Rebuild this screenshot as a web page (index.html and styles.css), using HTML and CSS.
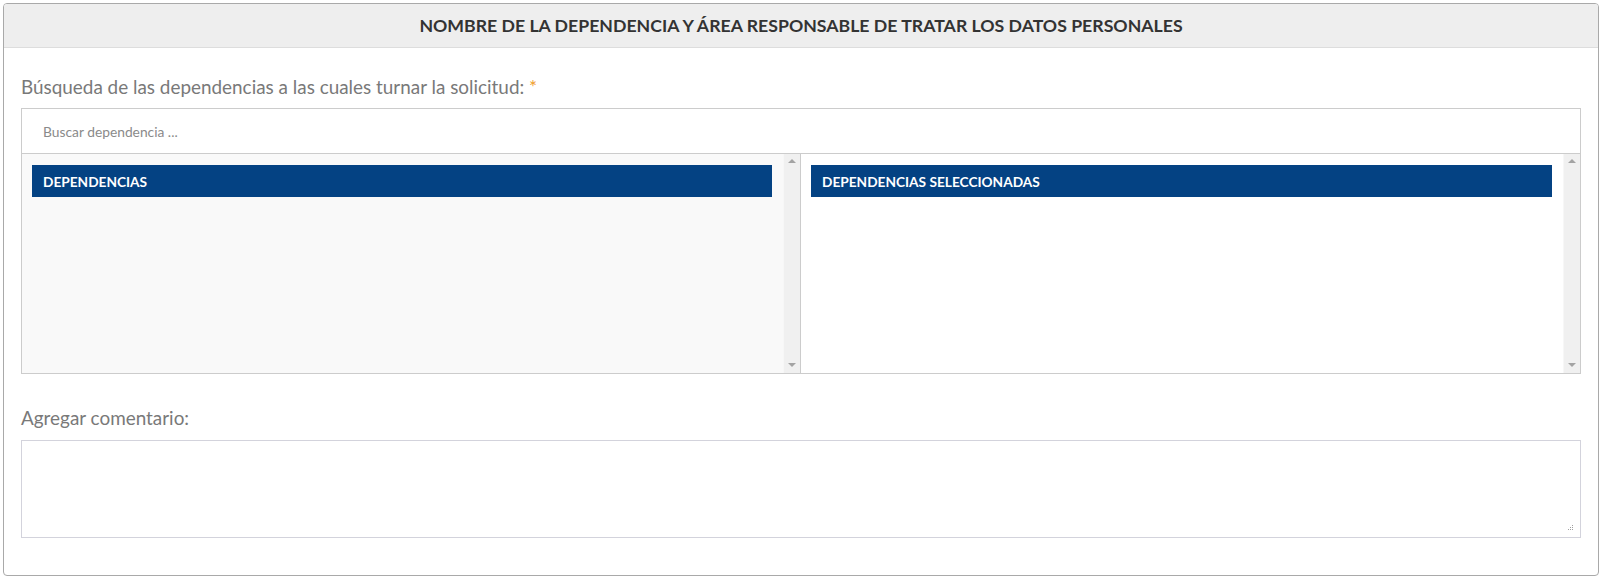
FILE: index.html
```html
<!DOCTYPE html>
<html lang="es">
<head>
<meta charset="utf-8">
<title>Dependencia</title>
<link rel="stylesheet" href="styles.css">
</head>
<body>
<div class="panel">
  <div class="panel-heading">NOMBRE DE LA DEPENDENCIA Y ÁREA RESPONSABLE DE TRATAR LOS DATOS PERSONALES</div>
  <div class="panel-body">
    <label class="field-label">Búsqueda de las dependencias a las cuales turnar la solicitud: <span class="req">*</span></label>
    <div class="dual">
      <input class="search" type="text" placeholder="Buscar dependencia ...">
      <div class="lists">
        <div class="list list-left">
          <div class="list-content">
            <div class="list-title">DEPENDENCIAS</div>
          </div>
          <div class="scrollbar"><span class="arrow up"></span><span class="arrow down"></span></div>
        </div>
        <div class="list list-right">
          <div class="list-content">
            <div class="list-title">DEPENDENCIAS SELECCIONADAS</div>
          </div>
          <div class="scrollbar"><span class="arrow up"></span><span class="arrow down"></span></div>
        </div>
      </div>
    </div>
    <label class="field-label comment-label">Agregar comentario:</label>
    <div class="comment-wrap">
      <textarea class="comment"></textarea>
      <span class="grip"></span>
    </div>
  </div>
</div>
</body>
</html>
```

FILE: styles.css
```css
* { box-sizing: border-box; }
html, body { margin: 0; background: #ffffff; }
body {
  padding: 3px 6px 4px 3px;
  font-family: Lato, "Open Sans", sans-serif;
}
.panel {
  border: 1px solid #a9a9a9;
  border-radius: 4px;
  height: 573px;
  display: flex;
  flex-direction: column;
  overflow: hidden;
}
.panel-heading {
  height: 44px;
  background: #eeeeee;
  border-bottom: 1px solid #dddddd;
  display: flex;
  align-items: center;
  justify-content: center;
  font-weight: 700;
  font-size: 17.7px;
  color: #333333;
}
.panel-body {
  padding: 28px 17px 0 17px;
  display: flex;
  flex-direction: column;
}
.field-label {
  display: block;
  font-size: 18.9px;
  line-height: 22px;
  color: #797979;
  margin-bottom: 10px;
}
.req { color: #f0a030; }
.dual {
  border: 1px solid #cccccc;
  display: flex;
  flex-direction: column;
}
.search {
  height: 45px;
  border: 0;
  border-bottom: 1px solid #cccccc;
  padding: 0 21px;
  font-family: Lato, "Open Sans", sans-serif;
  font-size: 13.8px;
  color: #555;
  outline: none;
  background: #fff;
}
.search::placeholder { color: #8a8a8a; }
.lists {
  display: grid;
  grid-template-columns: 1fr 1fr;
  height: 219px;
}
.list {
  display: flex;
  min-width: 0;
}
.list-left { background: #f9f9f9; border-right: 1px solid #cccccc; }
.list-right { background: #ffffff; }
.list-content {
  flex: 1;
  padding: 11px 11px 0 10px;
}
.list-title {
  height: 32px;
  background: #044283;
  color: #ffffff;
  font-weight: 700;
  font-size: 13.7px;
  display: flex;
  align-items: center;
  padding-left: 11px;
}
.scrollbar {
  width: 17px;
  background: #f0f0f0;
  border-left: 1px solid #f7f7f7;
  display: flex;
  flex-direction: column;
  justify-content: space-between;
  align-items: center;
  padding: 5px 0 6px;
}
.arrow {
  width: 0; height: 0;
  border-left: 4px solid transparent;
  border-right: 4px solid transparent;
}
.arrow.up { border-bottom: 4px solid #a3a3a3; }
.arrow.down { border-top: 4px solid #a3a3a3; }
.comment-label { margin-top: 33px; margin-bottom: 11px; }
.comment-wrap {
  position: relative;
  display: flex;
}
.comment {
  flex: 1;
  height: 98px;
  border: 1px solid #d3d3dc;
  resize: none;
  font-family: Lato, "Open Sans", sans-serif;
  outline: none;
}
.grip {
  position: absolute;
  right: 8px;
  bottom: 8px;
  width: 1px;
  height: 1px;
  background: #a0a0a0;
  box-shadow: 0 -4px #a0a0a0, 0 -2px #a0a0a0, -2px 0 #a0a0a0, -2px -2px #a0a0a0, -4px 0 #a0a0a0;
}
```
